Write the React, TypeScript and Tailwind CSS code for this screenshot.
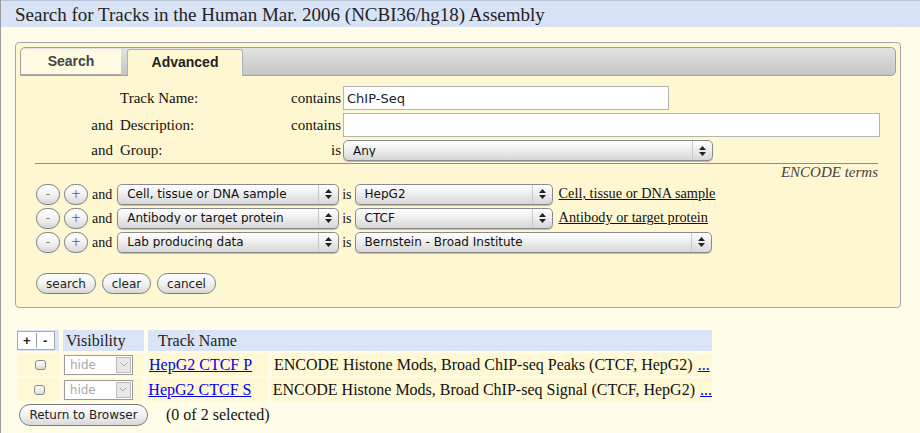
import React from "react";

const serif = "font-['Liberation_Serif','Times_New_Roman',serif]";
const sans = "font-['DejaVu_Sans',Verdana,sans-serif]";

function Arrows() {
  return (
    <div className="flex h-full w-[20px] flex-col items-center justify-center gap-[2px] border-l border-[#c8c8c8]">
      <svg width="7" height="4" viewBox="0 0 7 4">
        <path d="M3.5 0 L7 4 L0 4 Z" fill="#222" />
      </svg>
      <svg width="7" height="4" viewBox="0 0 7 4">
        <path d="M0 0 L7 0 L3.5 4 Z" fill="#222" />
      </svg>
    </div>
  );
}

function Select({ value, width }: { value: string; width: string }) {
  return (
    <div
      className={`flex h-[21px] ${width} items-center rounded-[5px] border border-[#8a8a8a] bg-gradient-to-b from-[#ffffff] via-[#ececec] to-[#d6d6d6] shadow-[0_1px_0_#bbb] ${sans}`}
    >
      <span className="flex-1 truncate pl-[9px] text-[12px] leading-none text-[#111]">{value}</span>
      <Arrows />
    </div>
  );
}

function Pill({ label, className = "" }: { label: string; className?: string }) {
  return (
    <button
      className={`flex h-[21px] items-center justify-center rounded-full border border-[#7c7c7c] bg-gradient-to-b from-[#ffffff] via-[#f2f2f2] to-[#d8d8d8] px-0 text-[12px] leading-none text-[#222] ${sans} ${className}`}
    >
      {label}
    </button>
  );
}

function EncodeRow({
  term,
  value,
  valueWidth,
  link,
}: {
  term: string;
  value: string;
  valueWidth: string;
  link?: string;
}) {
  return (
    <div className="flex h-[20px] items-center">
      <Pill label="-" className="w-[24px] text-[9px] text-[#777]" />
      <Pill label="+" className="ml-[4px] w-[24px] text-[10px] text-[#777]" />
      <span className={`ml-[4px] text-[14px] ${serif}`}>and</span>
      <div className="ml-[5px]">
        <Select value={term} width="w-[222px]" />
      </div>
      <span className={`ml-[3px] text-[14px] ${serif}`}>is</span>
      <div className="ml-[3px]">
        <Select value={value} width={valueWidth} />
      </div>
      {link && (
        <a className={`ml-[6px] text-[14.3px] text-[#111] underline ${serif}`} href="#">
          {link}
        </a>
      )}
    </div>
  );
}

function TrackRow({ name, desc }: { name: string; desc: string }) {
  return (
    <div className="flex h-[23px] gap-[4px]">
      <div className="flex w-[42px] items-center justify-center bg-[#fff8d4] pl-[4px]">
        <div className="h-[10px] w-[11px] rounded-[3px] border border-[#8a8a8a] bg-gradient-to-b from-white to-[#ddd]" />
      </div>
      <div className="flex w-[81px] items-center bg-[#fff8d4]">
        <div className={`ml-[1px] flex h-[20px] w-[69px] items-center border border-[#9a9a9a] bg-white ${sans}`}>
          <span className="flex-1 pl-[5px] text-[12px] text-[#aaa]">hide</span>
          <div className="mr-[1px] flex h-[16px] w-[15px] items-center justify-center border border-[#bbb] bg-[#e8e8e8]">
            <svg width="8" height="5" viewBox="0 0 8 5">
              <path d="M0.5 0.5 L4 4 L7.5 0.5" stroke="#aaa" fill="none" />
            </svg>
          </div>
        </div>
      </div>
      <div className="flex w-[120px] items-center bg-[#fff8d4] pl-[1px]">
        <a className={`text-[16px] text-[#0000ee] underline ${serif}`} href="#">
          {name}
        </a>
      </div>
      <div className={`flex flex-1 items-center bg-[#fff8d4] pl-[2px] text-[16px] text-[#111] ${serif}`}>
        <span className="whitespace-nowrap">{desc}</span>
        <a className="ml-[5px] text-[#0000ee] underline" href="#">
          ...
        </a>
      </div>
    </div>
  );
}

export default function App() {
  return (
    <div className="min-h-[433px] w-[920px] border-l border-[#9a9a9a] bg-[#fffde8]">
      {/* Title */}
      <div className="flex h-[27px] items-center border-t border-[#b8c4d8] bg-[#d8e3f6] pl-[14px]">
        <h1 className={`text-[19px] leading-none text-[#222] ${serif}`}>
          Search for Tracks in the Human Mar. 2006 (NCBI36/hg18) Assembly
        </h1>
      </div>

      {/* Search panel */}
      <div className="ml-[14px] mt-[15px] w-[886px] rounded-[4px] border border-[#a8a8a8] bg-[#fff7d1] px-[4px] pb-[13px] pt-[4px]">
        {/* Tabs */}
        <div className="flex h-[29px] items-end rounded-t-[5px] rounded-r-[5px] border border-[#a0a0a0] bg-gradient-to-b from-[#e2e2e2] to-[#c6c6c6]">
          <div className="flex h-[26px] w-[100px] items-center justify-center rounded-tl-[4px] border-b border-[#aaa] bg-[#fdfae1] font-['Liberation_Sans',Arial,sans-serif] text-[14px] font-bold text-[#444]">
            Search
          </div>
          <div className="ml-[6px] flex h-[27px] w-[116px] translate-y-[1px] items-center justify-center rounded-t-[3px] border-x border-t border-[#b0b0b0] bg-[#fff7d1] pb-[2px] font-['Liberation_Sans',Arial,sans-serif] text-[14px] font-bold text-[#222]">
            Advanced
          </div>
        </div>

        {/* Form */}
        <div className={`pt-[10px] text-[15px] text-[#111] ${serif}`}>
          <div className="flex h-[24px] items-center">
            <span className="w-[99px]" />
            <span className="w-[150px] pl-[1px]">Track Name:</span>
            <span className="w-[72px] text-right">contains</span>
            <input
              className="ml-[2px] h-[24px] w-[326px] border border-[#b4b4b4] bg-white px-[3px] font-['DejaVu_Sans',Verdana,sans-serif] text-[13px] text-[#222] outline-none"
              defaultValue="ChIP-Seq"
            />
          </div>
          <div className="mt-[3px] flex h-[24px] items-center">
            <span className="w-[99px] pr-[6px] text-right">and</span>
            <span className="w-[150px] pl-[1px]">Description:</span>
            <span className="w-[72px] text-right">contains</span>
            <input className="ml-[2px] h-[24px] w-[537px] border border-[#b4b4b4] bg-white outline-none" />
          </div>
          <div className="mt-[3px] flex h-[21px] items-center">
            <span className="w-[99px] pr-[6px] text-right">and</span>
            <span className="w-[150px] pl-[1px]">Group:</span>
            <span className="w-[72px] text-right">is</span>
            <div className="ml-[2px]">
              <Select value="Any" width="w-[370px]" />
            </div>
          </div>

          <div className="ml-[15px] mt-[2px] w-[843px] border-t border-[#8c8c8c]" />
          <div className="w-[858px] text-right italic leading-[17px] text-[#444]">ENCODE terms</div>

          <div className="ml-[16px] mt-[3px] flex flex-col gap-[4px]">
            <EncodeRow
              term="Cell, tissue or DNA sample"
              value="HepG2"
              valueWidth="w-[198px]"
              link="Cell, tissue or DNA sample"
            />
            <EncodeRow
              term="Antibody or target protein"
              value="CTCF"
              valueWidth="w-[198px]"
              link="Antibody or target protein"
            />
            <EncodeRow term="Lab producing data" value="Bernstein - Broad Institute" valueWidth="w-[357px]" />
          </div>

          <div className="ml-[16px] mt-[21px] flex gap-[6px]">
            <Pill label="search" className="w-[60px]" />
            <Pill label="clear" className="w-[49px]" />
            <Pill label="cancel" className="w-[59px]" />
          </div>
        </div>
      </div>

      {/* Results */}
      <div className="ml-[16px] mt-[22px] w-[695px]">
        <div className={`flex h-[21px] gap-[4px] text-[16px] text-[#222] ${serif}`}>
          <div className="flex w-[42px] items-center bg-[#d9e4f7]">
            <div className="flex h-[19px] w-[38px] items-center border border-[#a8a8a8] bg-white font-['Liberation_Sans',Arial,sans-serif] text-[13px] font-bold">
              <span className="flex-1 text-center">+</span>
              <span className="h-[15px] border-l border-[#999]" />
              <span className="flex-1 text-center">-</span>
            </div>
          </div>
          <div className="flex w-[81px] items-center bg-[#d9e4f7] pl-[3px]">Visibility</div>
          <div className="flex flex-1 items-center bg-[#d9e4f7] pl-[10px]">Track Name</div>
        </div>
        <div className="mt-[2px] flex flex-col gap-[2px]">
          <TrackRow name="HepG2 CTCF P" desc="ENCODE Histone Mods, Broad ChIP-seq Peaks (CTCF, HepG2)" />
          <TrackRow name="HepG2 CTCF S" desc="ENCODE Histone Mods, Broad ChIP-seq Signal (CTCF, HepG2)" />
        </div>
        <div className="mt-[2px] flex items-center">
          <Pill label="Return to Browser" className="ml-[2px] h-[22px] w-[129px]" />
          <span className={`ml-[18px] text-[16px] text-[#111] ${serif}`}>(0 of 2 selected)</span>
        </div>
      </div>
    </div>
  );
}
